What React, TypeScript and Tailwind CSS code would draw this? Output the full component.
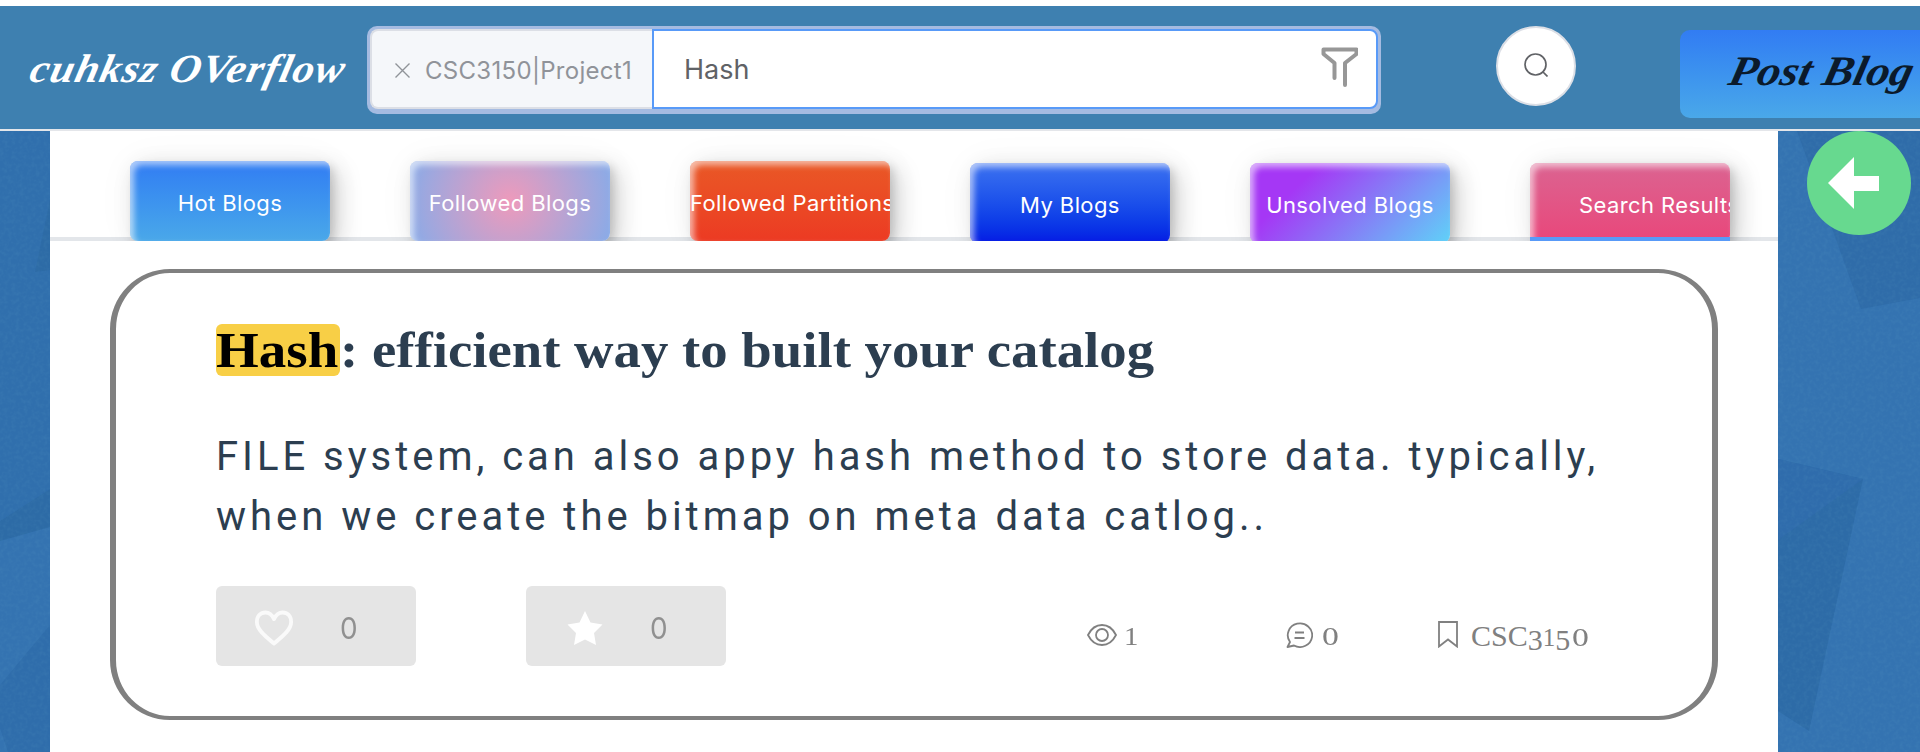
import React from "react";

const tabBase =
  "flex h-20 w-[200px] shrink-0 items-center overflow-hidden whitespace-nowrap rounded-lg pt-1 text-[22px] tracking-[0.4px] text-white shadow-[inset_4px_4px_6px_rgba(255,255,255,0.6),8px_8px_24px_rgba(0,0,0,0.18),4px_4px_8px_rgba(0,0,0,0.12),0px_0px_40px_rgba(0,0,0,0.04)]";

const tabs = [
  { label: "Hot Blogs", cls: "justify-center bg-linear-to-b from-[#327cf3] to-[#4aa8e9]" },
  { label: "Followed Blogs", cls: "justify-center bg-[radial-gradient(circle,#ee9abb_0%,#88abe8_100%)]" },
  { label: "Followed Partitions", cls: "justify-start bg-linear-to-b from-[#e95826] to-[#ec3a23]" },
  { label: "My Blogs", cls: "mt-0.5 justify-center bg-linear-to-b from-[#3d72f0] to-[#0718e4]" },
  { label: "Unsolved Blogs", cls: "mt-0.5 justify-center bg-[linear-gradient(135deg,#a537f5_25%,#5fd2f8_100%)]" },
  { label: "Search Results", cls: "mt-0.5 justify-start pl-[49px] bg-linear-to-b from-[#db6391] to-[#e9457a]" },
];

function Backdrop() {
  return (
    <svg className="absolute inset-x-0 top-[131px] h-[621px] w-full" viewBox="0 131 1920 621">
      <defs>
        <filter id="grain" x="0" y="0" width="100%" height="100%">
          <feTurbulence type="fractalNoise" baseFrequency="0.25" numOctaves="2" />
          <feColorMatrix values="0 0 0 0 0.15  0 0 0 0 0.42  0 0 0 0 0.6  0 0 0 1.2 -0.45" />
        </filter>
      </defs>
      <rect y="131" width="1920" height="621" fill="#3473b1" />
      <path d="M0 131H50V489L0 521Z" fill="#306fad" />
      <path d="M35 272L50 200V270Z" fill="#2d6ba6" />
      <path d="M0 521L50 489V527L0 541Z" fill="#2d6ba6" />
      <path d="M0 685L50 625V752H8L0 728Z" fill="#2f6dab" />
      <path d="M1797 131H1920V298L1861 309Z" fill="#2f6ca9" />
      <path d="M1778 459L1863 479L1809 731L1778 711Z" fill="#2d6ba7" />
      <path d="M1778 459L1863 479L1778 540Z" fill="#2f6cac" />
      <rect y="131" width="1920" height="621" filter="url(#grain)" opacity="0.18" />
    </svg>
  );
}

function Header() {
  return (
    <header className="relative mt-1.5 flex h-[125px] items-start overflow-hidden border-b-2 border-[#e4e6ea] bg-[#3e80b0]">
      <h1 className="ml-[31px] mt-[39px] w-[336px] shrink-0 origin-left scale-x-[1.07] -skew-x-12 whitespace-nowrap font-['Liberation_Serif'] text-[40px] leading-[48px] font-bold italic tracking-[1px] text-white">
        cuhksz OVerflow
      </h1>
      <div className="mt-5 flex h-[88px] w-[1014px] shrink-0 rounded-[10px] bg-[#a5bbe1] pt-[3px] pr-[3px] pb-[5px] pl-[3px]">
        <div className="flex w-[282px] items-center rounded-l-lg border-y-2 border-l-2 border-[#dcdfe6] bg-[#f5f7fa] pl-[23px] text-[#909399]">
          <svg className="mt-0.5 size-[15px]" viewBox="0 0 15 15" fill="none" stroke="#909399" strokeWidth="1.4">
            <path d="M.5.5l14 14M14.500.5l-14 14" />
          </svg>
          <span className="mt-[3px] ml-[15px] text-[24px] tracking-[0.3px]">CSC3150|Project1</span>
        </div>
        <div className="flex flex-1 items-start justify-between rounded-r-lg border-2 border-[#589af8] bg-white pr-[18px] pl-[30px] text-[#606266]">
          <span className="mt-[19px] text-[27px] leading-[40px]">Hash</span>
          <svg className="mt-[15px] h-[42px] w-[38px] blur-[0.5px]" viewBox="0 0 38 42" fill="none" stroke="#979797" strokeWidth="4" strokeLinejoin="round" strokeLinecap="round">
            <path d="M14.500 32V17L3.500 8V3.500H36.500V8L25 17V39" />
          </svg>
        </div>
      </div>
      <button className="mt-5 ml-[115px] flex size-20 shrink-0 items-center justify-center rounded-full border-2 border-[#dcdfe6] bg-white">
        <svg className="-mt-0.5 size-6" viewBox="0 0 24 24" fill="none" stroke="#606266" strokeWidth="1.7">
          <circle cx="11.500" cy="11.500" r="10.500" />
          <path d="M18.500 18.500l5 5" />
        </svg>
      </button>
      <button className="mt-6 ml-[104px] flex h-[88px] w-[280px] shrink-0 items-center rounded-[10px] bg-linear-to-b from-[#327cf3] to-[#4aa8e9] pl-[50px]">
        <span className="-mt-1.5 origin-left scale-x-[1.1] -skew-x-12 whitespace-nowrap font-['Liberation_Serif'] text-[42px] font-bold italic text-[#0b1a2b]">Post Blog</span>
      </button>
    </header>
  );
}

export default function App() {
  return (
    <div className="relative h-[752px] overflow-hidden bg-white font-[Inter,'Liberation_Sans',sans-serif]">
      <Backdrop />
      <Header />
      <div className="relative flex">
        <main className="ml-[50px] h-[621px] w-[1728px] shrink-0 bg-white">
          <nav className="relative flex h-[110px] items-start gap-20 overflow-hidden px-20 pt-[30px]">
            <div className="absolute inset-x-0 bottom-0 h-1 bg-[#e3e6ea]" />
            {tabs.map((t) => (
              <div key={t.label} className={"relative " + tabBase + " " + t.cls}>
                <span className="shrink-0">{t.label}</span>
              </div>
            ))}
            <div className="absolute bottom-0 left-[1480px] h-1 w-[200px] bg-[#589af8]" />
          </nav>
          <article className="mt-7 ml-[60px] flex h-[451px] w-[1608px] flex-col rounded-[60px] border-x-[6px] border-y-4 border-[#808080] pl-[100px]">
            <h2 className="mt-[51px] flex h-[52px] items-center whitespace-nowrap font-['Liberation_Serif'] text-[50px] leading-[52px] font-bold text-[#2c3e50]">
              <span className="flex h-[52px] w-[124px] items-center rounded-md bg-[#f8cf46] text-black">
                <span className="origin-left scale-x-[1.1]">Hash</span>
              </span>
              <span className="origin-left scale-x-[1.095]">: efficient way to built your catalog</span>
            </h2>
            <p className="mt-[51px] w-[1400px] whitespace-nowrap font-[Roboto] text-[40px] leading-[60px] tracking-[3.97px] text-[#2c3e50]">
              FILE system, can also appy hash method to store data. typically,
              <br />
              when we create the bitmap on meta data catlog..
            </p>
            <div className="mt-[39px] flex h-20 text-[#808080]">
              <button className="flex w-[200px] items-center rounded-md bg-[#e5e5e5] pl-[38px] text-[30px] text-[#909090]">
                <svg className="mt-1 h-[36px] w-[40px] blur-[0.5px]" viewBox="0 0 42 36" preserveAspectRatio="none" fill="none" stroke="#fafafa" strokeWidth="4" strokeLinejoin="round">
                  <path d="M21 33.500C13 27 3 20 3 12C3 6 7 2.500 12 2.500C16 2.500 19 5 21 9C23 5 26 2.500 30 2.500C35 2.500 39 6 39 12C39 20 29 27 21 33.500Z" />
                </svg>
                <span className="mt-1 ml-[46px] origin-left scale-x-[0.93]">0</span>
              </button>
              <button className="ml-[110px] flex w-[200px] items-center rounded-md bg-[#e5e5e5] pl-[41px] text-[30px] text-[#909090]">
                <svg className="mt-1 h-9 w-[36px] blur-[0.5px]" viewBox="0 0 36 36" fill="#fff">
                  <path d="M18 1L23.500 12.500L35.500 14.500L27 23L29 35L18 29.500L7 35L9 23L.5 14.500L12.500 12.500Z" />
                </svg>
                <span className="mt-1 ml-[47px] origin-left scale-x-[0.93]">0</span>
              </button>
              <div className="ml-[361px] flex h-20 items-start pt-[34px] font-['Liberation_Serif'] text-[30px] leading-[32px]">
                <div className="flex w-[199px] items-start">
                  <svg className="mt-1 h-[22px] w-[30px]" viewBox="0 0 30 22" fill="none" stroke="#808080" strokeWidth="1.800">
                    <path d="M1 11C4 5 9 1 15 1S26 5 29 11C26 17 21 21 15 21S4 17 1 11Z" />
                    <circle cx="15" cy="11" r="6" />
                  </svg>
                  <span className="mt-px ml-[7px] origin-left scale-x-[1.15] text-[25px]">1</span>
                </div>
                <div className="flex w-[152px] items-start">
                  <svg className="mt-0.5 h-[26px] w-[27px]" viewBox="0 0 27 26" fill="none" stroke="#808080" strokeWidth="1.800" strokeLinejoin="round">
                    <path d="M4 20A12.200 11.800 0 1 1 8 23.500L1.500 25Z" />
                    <path d="M9 10.500H18M8.500 16H18.500" />
                  </svg>
                  <span className="mt-px ml-[9px] origin-left scale-x-[1.35] text-[25px]">0</span>
                </div>
                <div className="flex items-start whitespace-nowrap">
                  <svg className="mt-px h-[27px] w-5" viewBox="0 0 20 27" fill="none" stroke="#808080" strokeWidth="1.800">
                    <path d="M1 1H19V25.500L10 18.500L1 25.500Z" />
                  </svg>
                  <span className="ml-[13px] flex items-baseline">
                    <span>CSC</span>
                    <span className="relative top-1">3</span>
                    <span className="text-[25px]">1</span>
                    <span className="relative top-1">5</span>
                    <span className="ml-0.5 origin-left scale-x-[1.35] text-[25px]">0</span>
                  </span>
                </div>
              </div>
            </div>
          </article>
        </main>
        <button className="ml-[29px] flex size-[104px] shrink-0 items-center justify-center rounded-full bg-[#67d98f]">
          <svg className="mr-3 h-[52px] w-[51px]" viewBox="0 0 51 52" fill="#fff">
            <path d="M0 26L26 0V19H51V34H26V52Z" />
          </svg>
        </button>
      </div>
    </div>
  );
}
